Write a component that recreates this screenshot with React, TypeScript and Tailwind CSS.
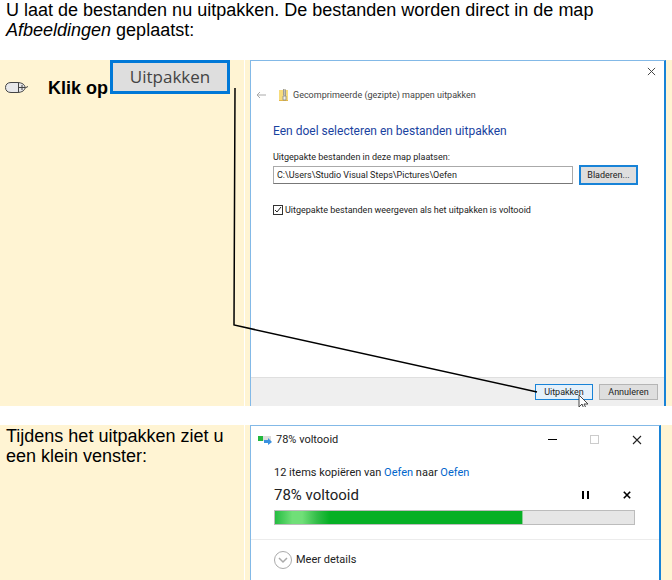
import type { ReactNode } from "react";

function CloseIcon({ className }: { className: string }) {
  return (
    <svg viewBox="0 0 10 10" className={className} fill="none" stroke="currentColor" strokeWidth="1.1" aria-hidden="true">
      <path d="M1 1 9 9M9 1 1 9" />
    </svg>
  );
}

function MouseIcon() {
  return (
    <svg viewBox="0 0 24 14" className="h-[14px] w-6 shrink-0" fill="#e8e8ea" stroke="#444" aria-hidden="true">
      <path d="M6 1.500H12C17.500 1.500 20 4 20 6.500S17.500 11.500 12 11.500H6C2.500 11.500.5 9.500.5 6.500S2.500 1.500 6 1.500Z" />
      <path d="M13.500 1.500v10M13.500 6.500h6.500M17 4v5M20 7l3-1.500" fill="none" />
    </svg>
  );
}

function ZipIcon() {
  return (
    <svg viewBox="0 0 10 13" className="h-[13px] w-[10px] shrink-0" aria-hidden="true">
      <path d="M0 1h9v11H0Z" fill="#f7dc7c" />
      <path d="M0 11.500h9" stroke="#e3b84a" />
      <path d="M4 0h3v9H4Z" fill="#c7c4b4" />
      <path d="M4 1h1M6 2h1M4 3h1M6 4h1M4 5h1M6 6h1" stroke="#777" />
      <path d="M4 7h3v4H4Z" fill="#eee" stroke="#8b8b80" strokeWidth=".8" />
    </svg>
  );
}

function Row({ left, children }: { left: ReactNode; children: ReactNode }) {
  return (
    <div className="flex gap-px">
      <div className="w-[244px] shrink-0 bg-[#fff4d3]">{left}</div>
      <div className="flex min-w-0 flex-1 bg-[#fff4d3] pl-[5px]">{children}</div>
    </div>
  );
}

function ExtractDialog() {
  return (
    <section className="mr-[6px] flex min-w-0 flex-1 flex-col border-t border-r-2 border-l border-t-[#83b9e7] border-r-[#1883d7] border-l-[#83b9e7] bg-white font-[Roboto,'Noto_Sans',sans-serif] text-[9px] text-[#222]">
      <div className="flex h-5 items-center justify-end pr-2">
        <button type="button" aria-label="Sluiten" className="text-[#444]">
          <CloseIcon className="size-[9px]" />
        </button>
      </div>
      <div className="flex h-7 items-center pl-[5px] text-[#444]">
        <button type="button" aria-label="Terug" className="text-[#aaa]">
          <svg viewBox="0 0 10 8" className="h-2 w-[10px]" fill="none" stroke="currentColor" aria-hidden="true">
            <path d="M10 4H1M4 1 1 4l3 3" />
          </svg>
        </button>
        <div className="flex items-center gap-1 pl-[13px]">
          <ZipIcon />
          <span>Gecomprimeerde (gezipte) mappen uitpakken</span>
        </div>
      </div>
      <div className="flex flex-col pr-[26px] pl-[22px]">
        <h2 className="mt-3 text-xs leading-5 text-[#1a439f]">Een doel selecteren en bestanden uitpakken</h2>
        <label htmlFor="target" className="mt-2 leading-4">Uitgepakte bestanden in deze map plaatsen:</label>
        <div className="flex items-center gap-[6px]">
          <input id="target" type="text" defaultValue="C:\Users\Studio Visual Steps\Pictures\Oefen" className="h-[18px] min-w-0 flex-1 border border-[#aaa] border-b-[#777] bg-white px-[3px]" />
          <button type="button" className="h-5 w-[59px] border-2 border-[#1883d7] bg-[#dedede] leading-4">Bladeren...</button>
        </div>
        <label className="mt-4 flex h-[18px] items-center gap-[2px]">
          <span className="relative flex size-[10px]">
            <input type="checkbox" defaultChecked className="size-[10px] appearance-none border border-[#333] bg-white" />
            <svg viewBox="0 0 10 10" className="pointer-events-none absolute inset-0 size-[10px]" fill="none" stroke="#222" aria-hidden="true">
              <path d="m2 5 2 2 4-5" />
            </svg>
          </span>
          <span>Uitgepakte bestanden weergeven als het uitpakken is voltooid</span>
        </label>
      </div>
      <div className="mt-[158px] flex h-[29px] items-center justify-end gap-[6px] border-t border-[#dfdfdf] bg-[#efefef] pr-[6px]">
        <button type="button" className="relative h-4 w-[58px] border border-[#1883d7] bg-[#e5f1fb] leading-3">
          Uitpakken
          <span className="absolute top-[9px] left-[42px] h-[13px] w-[11px] overflow-hidden">
            <svg viewBox="0 0 11 15" className="h-[15px] w-[11px]" aria-hidden="true">
              <path d="M1 1v12l3-3 2 5 2-1-2-4h4Z" fill="#fff" stroke="#444" />
            </svg>
          </span>
        </button>
        <button type="button" className="h-4 w-[59px] border border-[#b5b5b5] bg-[#dedede] leading-3">Annuleren</button>
      </div>
    </section>
  );
}

function ProgressWindow() {
  return (
    <section className="mr-[11px] flex min-w-0 flex-1 flex-col border-t border-r-2 border-l border-t-[#83b9e7] border-r-[#1883d7] border-l-[#83b9e7] bg-white font-[Roboto,'Noto_Sans',sans-serif] text-[11px] text-[#222]">
      <header className="flex h-[27px] items-center pr-[17px] pl-[7px]">
        <svg viewBox="0 0 14 10" className="mr-1 h-[10px] w-[14px]" aria-hidden="true">
          <path d="M5 1h8v5H5Z" fill="#ddd" />
          <path d="M0 1h5v5H0Z" fill="#22b83d" />
          <path d="M6 5h4V3l4 4-4 3V8H6Z" fill="#3a91e0" />
        </svg>
        <h2 className="flex-1">78% voltooid</h2>
        <div className="flex items-center gap-[33px]">
          <button type="button" aria-label="Minimaliseren" className="h-px w-[9px] bg-black" />
          <button type="button" aria-label="Maximaliseren" className="size-[9px] border border-[#ccc]" />
          <button type="button" aria-label="Sluiten"><CloseIcon className="size-[10px]" /></button>
        </div>
      </header>
      <div className="pr-6 pl-[23px]">
        <p className="mt-3 leading-4">
          12 items kopiëren van <a href="#bron" className="text-[#0066cc]">Oefen</a> naar <a href="#doel" className="text-[#0066cc]">Oefen</a>
        </p>
        <div className="mt-[2px] flex h-6 items-center justify-between">
          <span id="progress-label" className="text-[15px]">78% voltooid</span>
          <div className="flex items-center gap-[34px] pr-1">
            <button type="button" aria-label="Pauzeren" className="h-2 w-[7px] border-x-2 border-black" />
            <button type="button" aria-label="Annuleren" className="text-black"><CloseIcon className="size-2 stroke-2" /></button>
          </div>
        </div>
        <div role="progressbar" aria-labelledby="progress-label" aria-valuenow={78} className="mt-[3px] h-[15px] border border-[#bcbcbc] bg-[#e6e6e6]">
          <div className="h-full w-[69%] border-r border-[#8bce94] bg-[linear-gradient(90deg,#25bc41_0%,#70df78_7%,#70df78_11%,#32bd48_17%,#06b025_22%)]" />
        </div>
      </div>
      <div className="mt-[14px] flex h-[41px] items-center border-t border-[#ececec] pl-[23px]">
        <button type="button" className="flex items-center gap-1">
          <svg viewBox="0 0 18 18" className="size-[18px]" fill="none" stroke="#aaa" aria-hidden="true">
            <circle cx="9" cy="9" r="8.500" />
            <path d="m5 7 4 4 4-4" strokeWidth="1.500" />
          </svg>
          Meer details
        </button>
      </div>
    </section>
  );
}

export default function App() {
  return (
    <main className="overflow-hidden bg-white font-['Liberation_Sans',Arial,sans-serif] text-lg leading-5 text-black">
      <p className="h-[60px] max-w-[600px] pl-[6px]">
        U laat de bestanden nu uitpakken. De bestanden worden direct in de map <em>Afbeeldingen</em> geplaatst:
      </p>
      <div className="relative">
        <Row
          left={
            <div className="flex pl-[5px]">
              <div className="flex h-[55px] items-center">
                <MouseIcon />
                <strong className="pl-[19px]">Klik op</strong>
              </div>
              <button type="button" className="ml-[2px] h-[34px] w-[120px] border-3 border-[#0078d7] bg-[#dedede] font-['Open_Sans','Noto_Sans',sans-serif] text-[17px] leading-7 text-[#444]">
                Uitpakken
              </button>
            </div>
          }
        >
          <ExtractDialog />
        </Row>
        <svg viewBox="0 0 672 346" className="pointer-events-none absolute top-0 left-0 h-[346px] w-[672px]" fill="none" stroke="#000" strokeWidth="1.500" aria-hidden="true">
          <path d="M235 28 234 265 537 332" />
        </svg>
      </div>
      <div className="mt-[19px]">
        <Row left={<p className="max-w-[240px] pt-[1px] pl-[6px]">Tijdens het uitpakken ziet u een klein venster:</p>}>
          <ProgressWindow />
        </Row>
      </div>
    </main>
  );
}
